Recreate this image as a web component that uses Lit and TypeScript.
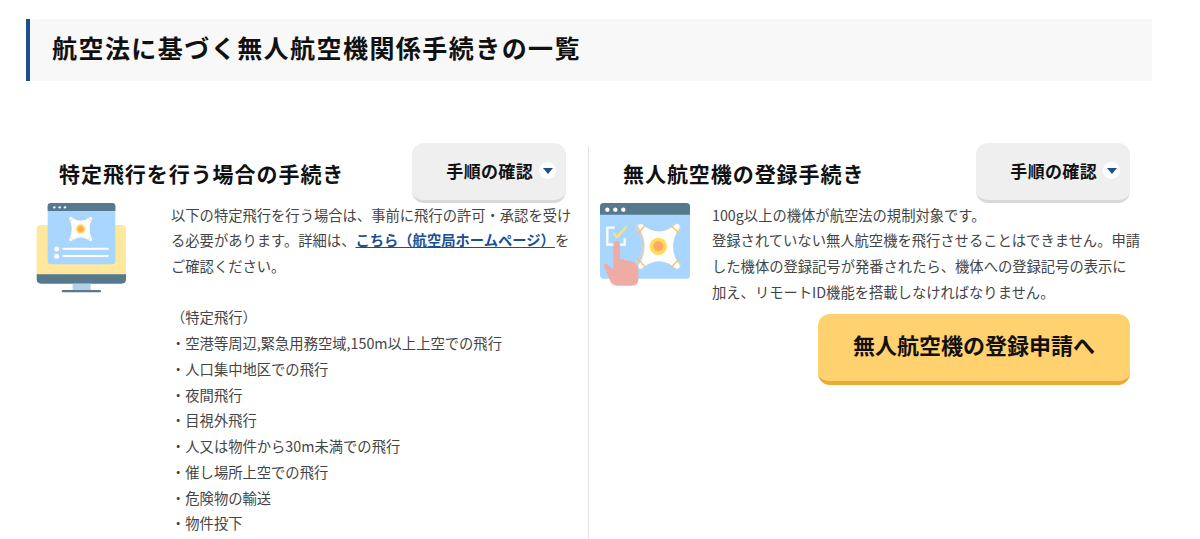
import { LitElement, html, css, svg } from "lit";
import { customElement } from "lit/decorators.js";

const droneLeft = svg`
  <path d="M122 70 Q152 94 182 70 Q166 102 182 134 Q152 110 122 134 Q138 102 122 70Z" fill="#fff" stroke="#fff" stroke-width="9" stroke-linejoin="round"/>
  <path d="M120 79 L131 69 M173 69 L184 79 M120 125 L131 135 M173 135 L184 125" stroke="#ffd59a" stroke-width="3" stroke-linecap="round"/>
  <circle cx="152" cy="102" r="14" fill="#ffd75e"/>
  <circle cx="152" cy="102" r="8.5" fill="#ffa95c"/>`;

const iconLeft = html`<svg class="icon" width="91" height="90" viewBox="18 24 273 270" aria-hidden="true">
  <path d="M20 103 Q20 90 33 90 H275 Q288 90 288 103 V240 H20Z" fill="#ffe79b"/>
  <path d="M20 238 H288 V253 Q288 266 275 266 H33 Q20 266 20 253Z" fill="#56798e"/>
  <rect x="128" y="266" width="54" height="19" fill="#b5cfe3"/>
  <rect x="95" y="285" width="118" height="7" rx="3" fill="#56798e"/>
  <rect x="53" y="24" width="203" height="184" rx="10" fill="#a8d6ff"/>
  <path d="M53 48 V34 Q53 24 63 24 H246 Q256 24 256 34 V48Z" fill="#56798e"/>
  <circle cx="73" cy="37" r="3.5" fill="#fff"/><circle cx="89" cy="37" r="3.5" fill="#fff"/><circle cx="105" cy="37" r="3.5" fill="#fff"/>
  ${droneLeft}
  <circle cx="80" cy="162" r="7.5" fill="#fff"/><circle cx="80" cy="184" r="7.5" fill="#fff"/>
  <rect x="97" y="158" width="139" height="6" rx="3" fill="#fff"/>
  <rect x="97" y="180" width="139" height="6" rx="3" fill="#fff"/>
</svg>`;

const iconRight = html`<svg class="icon" width="90" height="84" viewBox="30 40 270 252" aria-hidden="true">
  <rect x="30" y="40" width="270" height="227" rx="11" fill="#a8d6ff"/>
  <path d="M30 75 V51 Q30 40 41 40 H289 Q300 40 300 51 V75Z" fill="#56798e"/>
  <circle cx="52" cy="60" r="6.5" fill="#fff"/><circle cx="76" cy="60" r="6.5" fill="#fff"/><circle cx="100" cy="60" r="6.5" fill="#fff"/>
  <g fill="#b8e0e4">
    <circle cx="150" cy="116" r="15"/><circle cx="258" cy="116" r="15"/><circle cx="150" cy="224" r="15"/><circle cx="258" cy="224" r="15"/>
  </g>
  <path d="M142 110 Q198 155 254 110 Q216 170 254 230 Q198 185 142 230 Q180 170 142 110Z" fill="#cdd2d4" stroke="#cdd2d4" stroke-width="14" stroke-linejoin="round"/>
  <path d="M152 110 Q208 155 262 110 Q222 170 262 230 Q208 185 152 230 Q190 170 152 110Z" fill="#fff" stroke="#fff" stroke-width="14" stroke-linejoin="round"/>
  <path d="M144 131 L164 109 M244 108 L266 129 M144 208 L164 231 M244 232 L266 210" stroke="#f9bd6b" stroke-width="4" stroke-linecap="round"/>
  <circle cx="205" cy="170" r="26" fill="#ffdc5e"/>
  <circle cx="205" cy="170" r="15" fill="#ffa95c"/>
  <path d="M74 114 H52 V165 H72 M104 146 V165 H88" fill="none" stroke="#fff" stroke-width="7" stroke-linejoin="round"/>
  <path d="M72 132 L81 143 L108 112" fill="none" stroke="#ffe07a" stroke-width="6.5" stroke-linecap="round" stroke-linejoin="round"/>
  <path d="M70 165 Q70 155 80 155 Q90 155 90 165 V208 L118 214 Q145 218 145 240 V268 Q145 288 125 288 H82 Q64 288 58 268 L42 230 Q40 220 50 222 L70 240Z" fill="#eeaca4"/>
</svg>`;

@customElement("app-root")
export class AppRoot extends LitElement {
  static styles = css`
    :host {
      display: block;
      height: 539px;
      overflow: hidden;
      box-sizing: border-box;
      padding: 19px 48px 0 26px;
      background: #fff;
      color: #444;
      font-family: "Noto Sans CJK JP", "Noto Sans", sans-serif;
    }
    h1 {
      margin: 0;
      height: 62px;
      box-sizing: border-box;
      border-left: 4px solid #1c4f8f;
      background: #f8f8f8;
      padding-left: 22px;
      font-size: 25px;
      font-weight: 700;
      letter-spacing: 0.058em;
      line-height: 57px;
      color: #111;
    }
    .cols {
      display: grid;
      grid-template-columns: 562px 1px 1fr;
      margin-top: 62px;
      height: 396px;
    }
    .rule {
      background: #e2e2e2;
      margin-top: 3px;
    }
    .head {
      display: flex;
      justify-content: space-between;
      align-items: center;
      height: 60px;
      padding-left: 33px;
      padding-right: 22px;
    }
    .col.right .head {
      padding-left: 34px;
    }
    h2 {
      margin: 0;
      font-size: 21px;
      font-weight: 700;
      letter-spacing: 0.045em;
      color: #111;
    }
    .toggle {
      display: flex;
      align-items: center;
      justify-content: flex-end;
      gap: 6px;
      box-sizing: border-box;
      width: 154px;
      height: 60px;
      padding: 0 10px 3px 0;
      border-bottom: 3px solid #d9d9d9;
      border-radius: 12px;
      background: #efefef;
      font-size: 17px;
      font-weight: 700;
      letter-spacing: 0.02em;
      color: #111;
    }
    .caret {
      display: flex;
      align-items: center;
      justify-content: center;
      width: 17px;
      height: 17px;
      border-radius: 50%;
      background: #fff;
    }
    .caret::before {
      content: "";
      margin-top: 2px;
      border-left: 5px solid transparent;
      border-right: 5px solid transparent;
      border-top: 6px solid #1c4f8f;
    }
    .body {
      display: flex;
      align-items: flex-start;
      padding-left: 10px;
    }
    .col.right .body {
      padding-left: 11px;
    }
    .icon {
      display: block;
      flex: none;
    }
    .text {
      margin: -1.5px 0 0 44px;
      width: 404px;
      font-size: 14.3px;
      line-height: 25.74px;
    }
    .col.right .text {
      margin-left: 22px;
      width: 430px;
    }
    .text p {
      margin: 0;
    }
    .text ul {
      list-style: none;
      margin: 25.74px 0 0;
      padding: 0;
    }
    .text a {
      color: #1c4f8f;
      font-weight: 700;
      text-decoration: underline;
    }
    .cta {
      display: flex;
      justify-content: flex-end;
      margin: 10px 22px 0 0;
    }
    .cta a {
      display: flex;
      align-items: center;
      justify-content: center;
      box-sizing: border-box;
      width: 312px;
      height: 71px;
      padding-bottom: 8px;
      border-bottom: 4px solid #e8ab33;
      border-radius: 12px;
      background: #ffd26f;
      font-size: 22px;
      font-weight: 700;
      color: #111;
    }
  `;

  private head(title: string) {
    return html`<div class="head">
      <h2>${title}</h2>
      <div class="toggle">手順の確認<span class="caret"></span></div>
    </div>`;
  }

  render() {
    const items = ["（特定飛行）", "・空港等周辺,緊急用務空域,150m以上上空での飛行", "・人口集中地区での飛行", "・夜間飛行", "・目視外飛行", "・人又は物件から30m未満での飛行", "・催し場所上空での飛行", "・危険物の輸送", "・物件投下"];
    return html`
      <h1>航空法に基づく無人航空機関係手続きの一覧</h1>
      <div class="cols">
        <section class="col">
          ${this.head("特定飛行を行う場合の手続き")}
          <div class="body">
            ${iconLeft}
            <div class="text">
              <p>以下の特定飛行を行う場合は、事前に飛行の許可・承認を受ける必要があります。詳細は、<a>こちら（航空局ホームページ）</a>をご確認ください。</p>
              <ul>${items.map((i) => html`<li>${i}</li>`)}</ul>
            </div>
          </div>
        </section>
        <div class="rule"></div>
        <section class="col right">
          ${this.head("無人航空機の登録手続き")}
          <div class="body">
            ${iconRight}
            <div class="text">
              <p>100g以上の機体が航空法の規制対象です。</p>
              <p>登録されていない無人航空機を飛行させることはできません。申請した機体の登録記号が発番されたら、機体への登録記号の表示に<br />加え、リモートID機能を搭載しなければなりません。</p>
            </div>
          </div>
          <div class="cta"><a>無人航空機の登録申請へ</a></div>
        </section>
      </div>
    `;
  }
}
